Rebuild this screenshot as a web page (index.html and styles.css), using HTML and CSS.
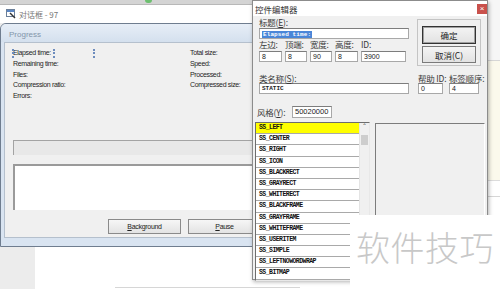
FILE: index.html
```html
<!DOCTYPE html>
<html lang="zh-CN">
<head>
  <meta charset="UTF-8">
  <title>控件编辑器</title>
  <link rel="stylesheet" href="styles.css">
</head>
<body>
  <div class="topstrip"><span class="blob"></span></div>

  <!-- 资源编辑器窗口 -->
  <div class="editor-win">
    <div class="editor-title">
      <svg class="app-icon" width="10" height="10" viewBox="0 0 10 10">
        <rect x="0.5" y="0.5" width="8" height="7" fill="#fff" stroke="#6b7f99"/>
        <rect x="1" y="1" width="7" height="2" fill="#5b86c4"/>
        <path d="M4 4 L9 9" stroke="#333" stroke-width="1.4"/>
      </svg>
      <span>对话框 - 97</span>
    </div>
    <div class="workspace">
      <div class="ws-gray"></div>
      <div class="ws-white"><div class="ws-line"></div></div>
    </div>
  </div>

  <!-- 正在编辑的对话框 -->
  <div class="dlg">
    <div class="dlg-caption">Progress</div>
    <div class="dlg-client">
      <div class="stats">
        <div class="stats-col left">
          <div class="stat">Elapsed time:<span class="handles"><i></i><i></i><i></i></span></div>
          <div class="stat">Remaining time:</div>
          <div class="stat">Files:</div>
          <div class="stat">Compression ratio:</div>
          <div class="stat">Errors:</div>
        </div>
        <div class="stats-col">
          <div class="stat">Total size:</div>
          <div class="stat">Speed:</div>
          <div class="stat">Processed:</div>
          <div class="stat">Compressed size:</div>
        </div>
      </div>
      <div class="progress"></div>
      <div class="log"></div>
      <div class="dlg-buttons">
        <button class="btn"><u>B</u>ackground</button>
        <button class="btn"><u>P</u>ause</button>
      </div>
    </div>
  </div>

  <div class="bg-win"></div>

  <!-- 控件编辑器 -->
  <div class="ce">
    <div class="ce-title">
      <span>控件编辑器</span>
      <span class="ce-close">×</span>
    </div>
    <div class="ce-body">
      <div class="ce-top">
        <div class="ce-main">
          <span class="lbl">标题(<u>E</u>):</span>
          <div class="inp edit-title"><span class="selected">Elapsed time:</span></div>
          <div class="pos-grid">
            <div class="pf"><span class="lbl">左边:</span><div class="inp">8</div></div>
            <div class="pf"><span class="lbl">顶端:</span><div class="inp">8</div></div>
            <div class="pf"><span class="lbl">宽度:</span><div class="inp">90</div></div>
            <div class="pf"><span class="lbl">高度:</span><div class="inp">8</div></div>
            <div class="pf"><span class="lbl">ID:</span><div class="inp">3900</div></div>
          </div>
        </div>
        <div class="ce-btns">
          <button class="ce-btn default">确定</button>
          <button class="ce-btn">取消(C)</button>
        </div>
      </div>

      <div class="ce-row2">
        <div class="ce-main">
          <span class="lbl">类名称(<u>S</u>):</span>
          <div class="inp mono">STATIC</div>
        </div>
        <div class="rf rf-help">
          <span class="lbl">帮助 ID:</span>
          <div class="inp">0</div>
        </div>
        <div class="rf rf-tab">
          <span class="lbl">标签顺序:</span>
          <div class="inp">4</div>
        </div>
      </div>

      <div class="ce-row3">
        <span class="lbl style-lbl">风格(<u>Y</u>):</span>
        <div class="inp style-inp">50020000</div>
      </div>

      <div class="ce-row4">
        <div class="ss-list">
          <div class="ss-items">
            <div class="ss-item on">SS_LEFT</div>
            <div class="ss-item">SS_CENTER</div>
            <div class="ss-item">SS_RIGHT</div>
            <div class="ss-item">SS_ICON</div>
            <div class="ss-item">SS_BLACKRECT</div>
            <div class="ss-item">SS_GRAYRECT</div>
            <div class="ss-item">SS_WHITERECT</div>
            <div class="ss-item">SS_BLACKFRAME</div>
            <div class="ss-item">SS_GRAYFRAME</div>
            <div class="ss-item">SS_WHITEFRAME</div>
            <div class="ss-item">SS_USERITEM</div>
            <div class="ss-item">SS_SIMPLE</div>
            <div class="ss-item">SS_LEFTNOWORDWRAP</div>
            <div class="ss-item">SS_BITMAP</div>
          </div>
          <div class="ss-scroll">
            <div class="ss-arrow">&#710;</div>
            <div class="ss-thumb"></div>
          </div>
        </div>
        <div class="ss-preview"></div>
      </div>
    </div>
  </div>

  <div class="watermark">软件技巧</div>
</body>
</html>
```

FILE: styles.css
```css
* {
  box-sizing: border-box;
}

body {
  margin: 0;
  width: 500px;
  height: 289px;
  overflow: hidden;
  position: relative;
  background: #fff;
  font-family: "Liberation Sans", "Noto Sans CJK SC", sans-serif;
  color: #222;
}

button {
  font-family: inherit;
  padding: 0;
  color: #222;
}

/* 背景窗口 */
.topstrip {
  position: absolute;
  left: 0;
  top: 0;
  width: 252px;
  height: 4px;
  background: #d4d4d4;
}

.blob {
  position: absolute;
  left: 145px;
  top: 0;
  width: 7px;
  height: 3px;
  border-radius: 0 0 4px 4px;
  background: #6cbf6f;
}

.bg-win {
  position: absolute;
  left: 488px;
  top: 0;
  width: 12px;
  height: 215px;
  background: linear-gradient(to bottom,
    #f6f6f6 0 60px, #d6d6d6 60px 61px,
    #fbf9ec 61px 180px, #dcdcdc 180px 181px,
    #fff 181px 196px, #d6d6d6 196px 197px, #fff 197px);
}

/* 对话框编辑器 */
.editor-win {
  position: absolute;
  left: 0;
  top: 4px;
  width: 300px;
  height: 285px;
  background: #fff;
}

.editor-title {
  height: 19px;
  display: flex;
  align-items: center;
  gap: 3px;
  padding-left: 6px;
  border-top: 1px solid #b8b8b8;
  font-family: "Noto Sans CJK SC", sans-serif;
  font-size: 8px;
  color: #777;
}

.workspace {
  display: flex;
  height: 266px;
}

.ws-gray {
  width: 85px;
  background: #ececec;
}

.ws-white {
  flex: 1;
  display: flex;
  flex-direction: column;
  justify-content: flex-end;
}

.ws-line {
  margin: 0 0 1px 80px;
  width: 185px;
  border-top: 1px solid #d6d6d6;
}

.dlg {
  position: absolute;
  left: 0;
  top: 23px;
  width: 300px;
  height: 224px;
  border: 1px solid #6f7d8f;
  border-radius: 6px 6px 0 0;
  background: #d9e4f1;
}

.dlg-caption {
  height: 18px;
  padding: 3px 0 0 8px;
  line-height: 15px;
  font-size: 8px;
  color: #8395aa;
  border-radius: 5px 5px 0 0;
  background: linear-gradient(#e7eef7, #d4e0ee);
}

.dlg-client {
  margin: 0 3px;
  height: 196px;
  background: #f0f0f0;
  border: 1px solid #b5c0cd;
}

.stats {
  display: flex;
  padding: 5px 0 0 8px;
}

.stats-col.left {
  width: 177px;
}

.stat {
  position: relative;
  line-height: 10.75px;
  font-size: 7px;
  letter-spacing: -0.35px;
  color: #1e1e1e;
  white-space: nowrap;
}

.handles {
  position: absolute;
  left: -1px;
  top: 1px;
  width: 83px;
  height: 9px;
  display: flex;
  justify-content: space-between;
}

.handles i {
  border-left: 2px dotted #6d8cbd;
}

.progress {
  margin: 38px 0 0 8px;
  height: 15px;
  background: #e8e8e8;
  border-top: 1px solid #a3a3a3;
  border-left: 1px solid #a3a3a3;
}

.log {
  margin: 9px 0 0 8px;
  height: 46px;
  background: #fff;
  border-top: 2px solid #9a9a9a;
  border-left: 2px solid #9a9a9a;
}

.dlg-buttons {
  display: flex;
  gap: 7px;
  margin: 9px 0 0 103px;
}

.btn {
  width: 73px;
  height: 15px;
  font-size: 7px;
  letter-spacing: -0.3px;
  border: 1px solid #8a8a8a;
  background: linear-gradient(#f6f6f6, #e3e3e3);
}

/* 控件编辑器 */
.ce {
  position: absolute;
  left: 252px;
  top: 0;
  width: 236px;
  height: 280px;
  border: 1px solid #8c8c8c;
  background: #f0f0f0;
  box-shadow: 1px 2px 4px rgba(0, 0, 0, 0.3);
  font-family: "Noto Sans CJK SC", sans-serif;
  font-size: 8.5px;
  color: #333;
}

.ce-title {
  height: 15px;
  display: flex;
  align-items: center;
  justify-content: space-between;
  padding-left: 2px;
  background: #fff;
}

.ce-close {
  width: 10px;
  height: 10px;
  background: #c9514c;
  color: #fff;
  font: 8px/10px "Liberation Sans", sans-serif;
  text-align: center;
}

.ce-body {
  padding: 1px 0 0 6px;
}

.lbl {
  display: block;
  height: 10px;
  line-height: 10px;
  font-size: 8.5px;
  letter-spacing: -0.2px;
  white-space: nowrap;
  color: #3a3a3a;
}

.inp {
  height: 11px;
  padding-left: 2px;
  background: #fff;
  border: 1px solid #a8a8a8;
  border-top-color: #7d7d7d;
  font: 7px/9px "Liberation Sans", sans-serif;
  color: #222;
  white-space: nowrap;
  overflow: hidden;
}

.inp.mono {
  font: bold 6px/9px "Liberation Mono", monospace;
}

.ce-top {
  display: flex;
}

.ce-main {
  width: 150px;
}

.edit-title {
  margin-top: 1px;
}

.selected {
  padding: 0 1px;
  background: #4a86d8;
  color: #fff;
  font: bold 6px/9px "Liberation Mono", monospace;
  letter-spacing: 0.1px;
}

.pos-grid {
  display: grid;
  grid-template-columns: 23px 22px 22px 23px 45px;
  column-gap: 3px;
}

.pf .lbl {
  height: 11px;
  line-height: 11px;
}

.pf .inp {
  margin-top: 1px;
}

.ce-btns {
  margin: 2px 0 0 8px;
  width: 64px;
  height: 47px;
  border: 1px solid #c4c4c4;
}

.ce-btn {
  display: block;
  width: 54px;
  height: 17px;
  margin: 2px 0 0 4px;
  font-size: 8.5px;
  border: 1px solid #7a7a7a;
  background: linear-gradient(#f4f4f4, #e2e2e2);
}

.ce-btn.default {
  height: 18px;
  margin-top: 6px;
  border-color: #333;
  box-shadow: inset 0 0 0 1px #a0a0a0;
}

.ce-row2 {
  display: flex;
  margin-top: 7px;
}

.rf-help {
  width: 25px;
  margin-left: 9px;
}

.rf-tab {
  width: 30px;
  margin-left: 6px;
}

.ce-row3 {
  display: flex;
  align-items: center;
  margin: 12px 0 0 -2px;
}

.style-lbl {
  width: 35px;
}

.style-inp {
  width: 40px;
  height: 12px;
  font-size: 7.5px;
  line-height: 10px;
}

.ce-row4 {
  display: flex;
  margin: 4px 0 0 -4px;
}

.ss-list {
  display: flex;
  width: 115px;
  height: 159px;
  background: #fff;
  border: 1px solid;
  border-color: #6d6d6d #e8e8e8 #e8e8e8 #6d6d6d;
}

.ss-items {
  flex: 1;
  overflow: hidden;
}

.ss-item {
  height: 11.2px;
  padding-left: 3px;
  border-bottom: 1px solid #a9a9a9;
  font: bold 6.5px/10px "Liberation Mono", monospace;
  letter-spacing: -0.55px;
  color: #111;
  white-space: nowrap;
}

.ss-item.on {
  background: #ffff00;
}

.ss-scroll {
  width: 10px;
  background: #f0f0f0;
  border-left: 1px solid #e4e4e4;
}

.ss-arrow {
  height: 12px;
  text-align: center;
  font: 8px/12px "DejaVu Sans", sans-serif;
  color: #555;
}

.ss-thumb {
  height: 10px;
  margin: 0 1px;
  background: #cdcdcd;
}

.ss-preview {
  width: 110px;
  height: 160px;
  margin: 1px 0 0 5px;
  border: 1px solid;
  border-color: #7c7c7c #fff #fff #7c7c7c;
}

/* 水印 */
.watermark {
  position: absolute;
  left: 350px;
  top: 215px;
  width: 150px;
  height: 74px;
  padding: 15px 0 0 6px;
  background: #fff;
  font-family: "Noto Sans CJK SC", sans-serif;
  font-size: 34px;
  font-weight: 300;
  line-height: 34px;
  letter-spacing: 0.5px;
  color: #c8c8c8;
  white-space: nowrap;
}
```
